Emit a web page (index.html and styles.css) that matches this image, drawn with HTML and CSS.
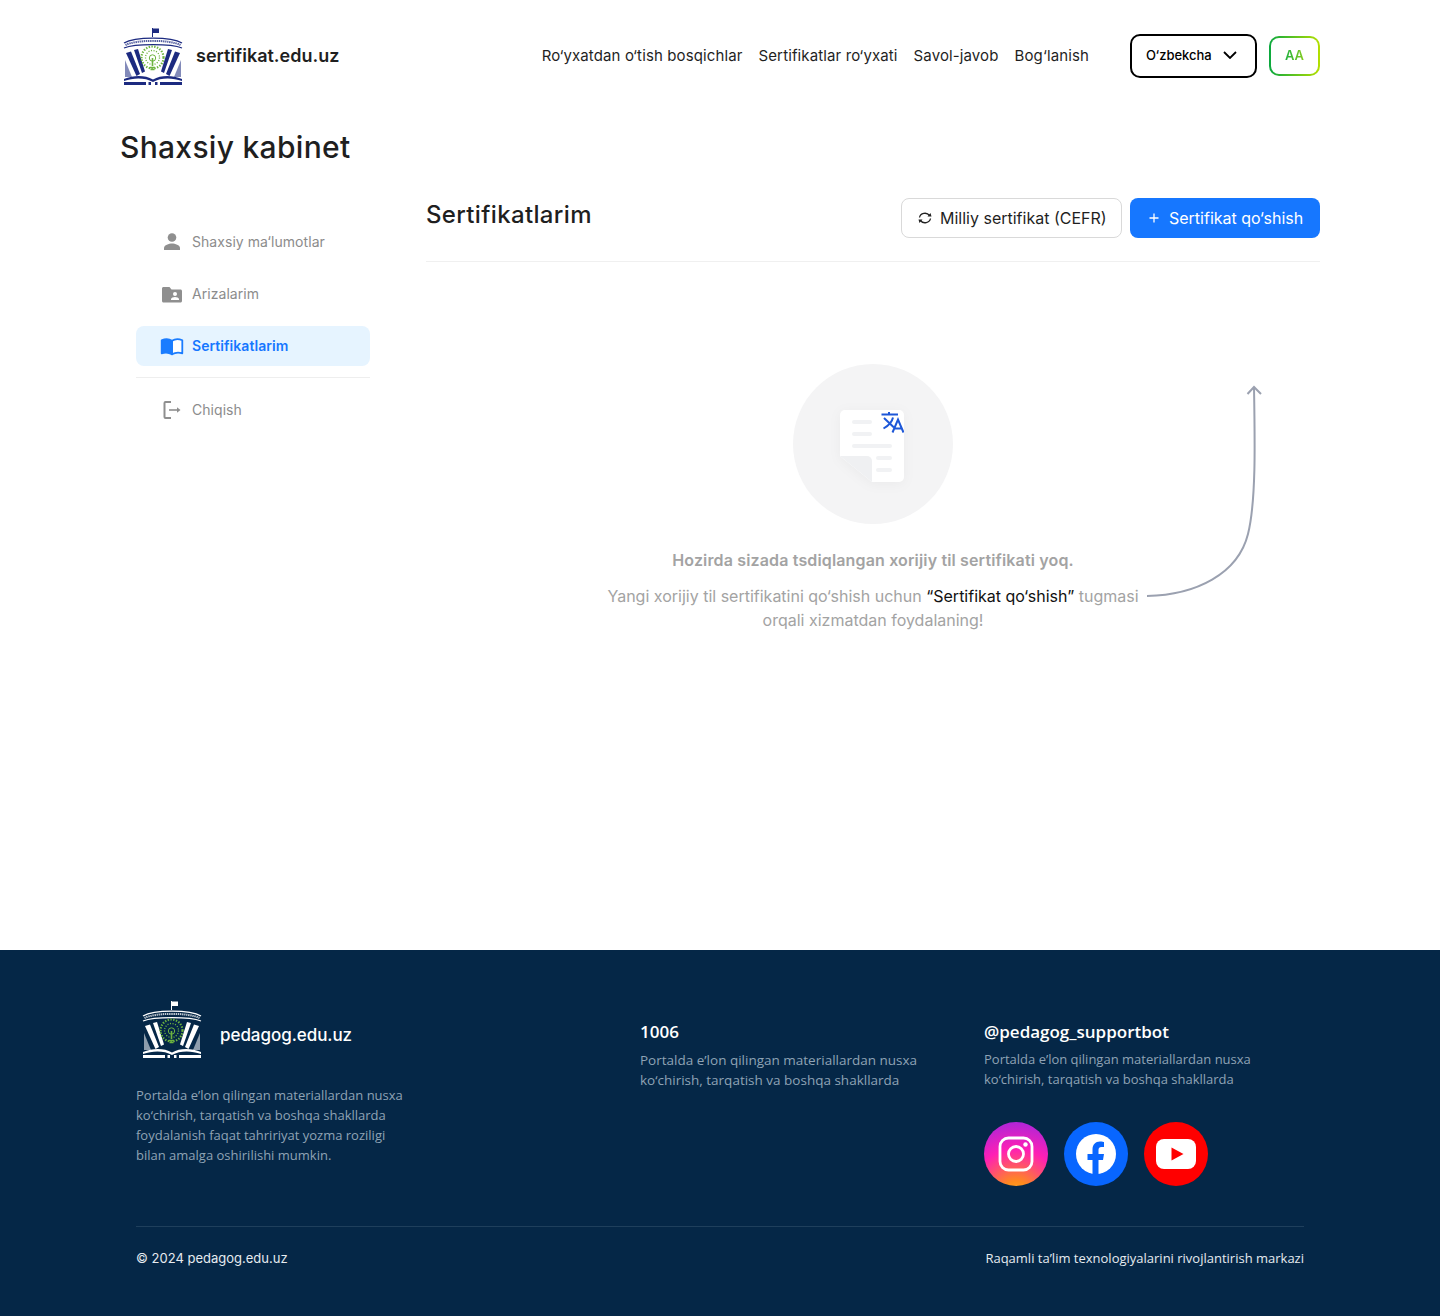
FILE: index.html
```html
<!DOCTYPE html>
<html lang="uz">
<head>
<meta charset="utf-8">
<title>Shaxsiy kabinet</title>
<link rel="stylesheet" href="styles.css">
</head>
<body>
<svg class="defs" width="0" height="0" aria-hidden="true">
  <symbol id="emblem" viewBox="0 0 60 58">
    <rect x="29" y="1" width="1" height="9" fill="currentColor"/>
    <rect x="30" y="1.500" width="6" height="4.500" fill="currentColor"/>
    <path d="M1 16C12 9.500 48 9.500 59 16" fill="none" stroke="currentColor" stroke-width="1.300"/>
    <path d="M2.500 18C13 12.500 47 12.500 57.500 18" fill="none" stroke="currentColor" stroke-width="2" stroke-dasharray="1.400 .7" opacity=".75"/>
    <path d="M1 21C12 16.500 48 16.500 59 21" fill="none" stroke="currentColor" stroke-width="1.300"/>
    <g fill="currentColor">
      <path d="M3 26L8 24.500L17 47L13.500 49z"/>
      <path d="M11 23L15 22L22 44.500L19 46z"/>
      <path d="M57 26L52 24.500L43 47L46.500 49z"/>
      <path d="M49 23L45 22L38 44.500L41 46z"/>
      <path d="M2 33L9 50L2 50z" opacity=".55"/>
      <path d="M58 33L51 50L58 50z" opacity=".55"/>
      <path d="M1 52C11 48 22 48 30 52.500C38 48 49 48 59 52V54C49 50.500 38 50.500 30 55C22 50.500 11 50.500 1 54z"/>
      <path d="M1 55H23V58H1zM37 55H59V58H37z"/>
      <path d="M25.500 55H28V58H25.500zM32 55H34.500V58H32z"/>
    </g>
    <circle cx="29.500" cy="30.500" r="11" fill="none" stroke="#6db33f" stroke-width="2.200" stroke-dasharray="1.400 1.400"/>
    <circle cx="29.500" cy="30.500" r="7" fill="none" stroke="#6db33f" stroke-width="1.300" stroke-dasharray="1.100 1.500"/>
    <circle cx="29.500" cy="31" r="3.200" fill="none" stroke="#6db33f" stroke-width="1"/>
    <path d="M29.500 31V39M27 40.500H32M27.500 42.500H31.500" stroke="#6db33f" stroke-width="1.600"/>
  </symbol>
</svg>

<div class="page">
  <header class="topbar">
    <a class="brand">
      <svg class="brand-logo" width="60" height="58"><use href="#emblem"/></svg>
      <span class="brand-name">sertifikat.edu.uz</span>
    </a>
    <nav class="topnav">
      <a>Ro‘yxatdan o‘tish bosqichlar</a>
      <a>Sertifikatlar ro‘yxati</a>
      <a>Savol-javob</a>
      <a>Bog‘lanish</a>
    </nav>
    <button class="lang">O‘zbekcha
      <svg width="14" height="8" viewBox="0 0 14 8"><path d="M1 1l6 6 6-6" fill="none" stroke="#000" stroke-width="1.800"/></svg>
    </button>
    <button class="a11y"><span class="a11y-text">AA</span></button>
  </header>

  <h1 class="page-title">Shaxsiy kabinet</h1>

  <div class="cabinet">
    <aside class="side">
      <a class="side-item">
        <svg width="24" height="24" viewBox="0 0 24 24"><circle cx="12" cy="7.500" r="4.300" fill="#8f8f8f"/><path d="M4 20v-2c0-3 5-4.500 8-4.500s8 1.500 8 4.500v2z" fill="#8f8f8f"/></svg>
        <span class="side-label">Shaxsiy ma‘lumotlar</span>
      </a>
      <a class="side-item">
        <svg width="24" height="24" viewBox="0 0 24 24"><path d="M2 6.500C2 5.500 2.800 5 3.500 5h6l2 2.500h9c.8 0 1.500.6 1.500 1.500v10c0 .8-.7 1.500-1.500 1.500h-17C2.700 20.500 2 19.800 2 19z" fill="#8f8f8f"/><circle cx="15" cy="12" r="2" fill="#fff"/><path d="M11 18v-1c0-1.300 2.500-2 4-2s4 .7 4 2v1z" fill="#fff"/></svg>
        <span class="side-label">Arizalarim</span>
      </a>
      <a class="side-item active">
        <svg width="24" height="24" viewBox="0 0 24 24"><path d="M12 6.800C15 4.800 19 4.800 22.300 6.300V19.300C19 18.300 15 18.500 12 20.300z" fill="#fff" stroke="#1a7cff" stroke-width="1.800" stroke-linejoin="round"/><path d="M1.700 6.300C5 4.800 9 4.800 12 6.800V20.300C9 18.500 5 18.300 1.700 19.300z" fill="#1a7cff" stroke="#1a7cff" stroke-width="1.800" stroke-linejoin="round"/></svg>
        <span class="side-label">Sertifikatlarim</span>
      </a>
      <div class="side-rule"></div>
      <a class="side-item">
        <svg width="24" height="24" viewBox="0 0 24 24"><path d="M11 4H5.500a1 1 0 0 0-1 1v14a1 1 0 0 0 1 1H11" fill="none" stroke="#8f8f8f" stroke-width="2"/><path d="M9 12h10" stroke="#8f8f8f" stroke-width="1.600"/><path d="M17 9.300l3.500 2.700-3.500 2.700z" fill="#8f8f8f"/></svg>
        <span class="side-label">Chiqish</span>
      </a>
    </aside>

    <main class="content">
      <div class="content-head">
        <h2 class="content-title">Sertifikatlarim</h2>
        <div class="actions">
          <button class="btn btn-ghost">
            <svg width="16" height="16" viewBox="0 0 16 16"><g fill="none" stroke="#222" stroke-width="1.300"><path d="M2.500 7.500A5.500 5 0 0 1 12.500 5.500"/><path d="M13.500 8.500A5.500 5 0 0 1 3.500 10.500"/></g><path d="M10.500 6.500h4l-1-3.500zM5.500 9.500h-4l1 3.500z" fill="#222"/></svg>
            Milliy sertifikat (CEFR)
          </button>
          <button class="btn btn-primary">
            <svg width="16" height="16" viewBox="0 0 16 16"><path d="M8 3.500v9M3.500 8h9" stroke="#fff" stroke-width="1.300"/></svg>
            Sertifikat qo‘shish
          </button>
        </div>
      </div>

      <section class="empty">
        <div class="empty-circle">
          <svg class="empty-doc" width="64" height="72" viewBox="0 0 64 72">
            <path d="M5 0H59a5 5 0 0 1 5 5V67a5 5 0 0 1-5 5H32L0 46V5a5 5 0 0 1 5-5z" fill="#fff"/>
            <path d="M0 46H27a5 5 0 0 1 5 5V72z" fill="#eff0f2"/>
            <g fill="#f1f2f4">
              <rect x="12" y="10" width="20" height="4" rx="2"/>
              <rect x="12" y="22" width="20" height="4" rx="2"/>
              <rect x="12" y="34" width="40" height="4" rx="2"/>
              <rect x="36" y="46" width="16" height="4" rx="2"/>
              <rect x="36" y="58" width="16" height="4" rx="2"/>
            </g>
            <g fill="none" stroke="#1d57d8" stroke-width="2">
              <path d="M41.500 4.500H58M49 2V4.500M44 8L54 17.500M53 7.500C52 12 48 16 43.500 18.500"/>
              <path d="M52.500 22.500L58 9.500L63.500 22.500M54.500 18.500H61.500"/>
            </g>
          </svg>
        </div>
        <p class="empty-title">Hozirda sizada tsdiqlangan xorijiy til sertifikati yoq.</p>
        <p class="empty-text">Yangi xorijiy til sertifikatini qo‘shish uchun <b>“Sertifikat qo‘shish”</b> tugmasi orqali xizmatdan foydalaning!</p>
        <svg class="empty-arrow" width="116" height="214" viewBox="0 0 116 214">
          <path d="M1 212C50 211 92 190 102 150C110 118 109 60 108 3M101.500 10L108 3L115 10" fill="none" stroke="#9ba1b0" stroke-width="2"/>
        </svg>
      </section>
    </main>
  </div>
</div>

<footer class="footer">
  <div class="footer-inner">
    <div class="footer-main">
      <div class="foot-about">
        <a class="foot-brand">
          <svg class="foot-logo" width="60" height="58"><use href="#emblem"/></svg>
          <span class="foot-name">pedagog.edu.uz</span>
        </a>
        <p class="foot-text">Portalda e’lon qilingan materiallardan nusxa ko‘chirish, tarqatish va boshqa shakllarda foydalanish faqat tahririyat yozma roziligi bilan amalga oshirilishi mumkin.</p>
      </div>
      <div class="foot-col">
        <h3 class="foot-head">1006</h3>
        <p class="foot-text foot-text-wide">Portalda e’lon qilingan materiallardan nusxa ko‘chirish, tarqatish va boshqa shakllarda</p>
      </div>
      <div class="foot-col foot-col-social">
        <h3 class="foot-head">@pedagog_supportbot</h3>
        <p class="foot-text">Portalda e’lon qilingan materiallardan nusxa ko‘chirish, tarqatish va boshqa shakllarda</p>
        <div class="socials">
          <a class="social social-ig">
            <svg width="36" height="36" viewBox="0 0 36 36"><rect x="2" y="2" width="32" height="32" rx="8.500" fill="none" stroke="#fff" stroke-width="2.800"/><circle cx="18" cy="18" r="7.500" fill="none" stroke="#fff" stroke-width="2.800"/><circle cx="27.500" cy="8.500" r="2.200" fill="#fff"/></svg>
          </a>
          <a class="social social-fb">
            <svg width="40" height="40" viewBox="0 0 40 40"><circle cx="20" cy="20" r="20" fill="#fff"/><path d="M16.500 40V26H11.500V20H16.500V15.500C16.500 10.500 19.500 7.500 24 7.500C26 7.500 28 8 28 8V13H25.500C23 13 22.500 14.500 22.500 16V20H28L27 26H22.500V40z" fill="#0866ff"/></svg>
          </a>
          <a class="social social-yt">
            <svg width="40" height="32" viewBox="0 0 40 32"><rect width="40" height="30" y="1" rx="8" fill="#fff"/><path d="M15.500 9.500L27.500 16L15.500 22.500z" fill="#f00"/></svg>
          </a>
        </div>
      </div>
    </div>
    <div class="foot-bottom">
      <span class="foot-copy">© 2024 pedagog.edu.uz</span>
      <span>Raqamli ta’lim texnologiyalarini rivojlantirish markazi</span>
    </div>
  </div>
</footer>
</body>
</html>
```
FILE: styles.css
```css
* { box-sizing: border-box; }
html, body { margin: 0; padding: 0; }
body { font-family: Inter, "Liberation Sans", sans-serif; color: #1f1f1f; background: #fff; height: 1316px; display: flex; flex-direction: column; }
p, h1, h2, h3 { margin: 0; }
button { font-family: inherit; cursor: pointer; }
.defs { position: absolute; }
.page { width: 1200px; margin: 0 auto; flex: 1; }

.topbar { height: 112px; display: flex; align-items: center; }
.brand { display: flex; align-items: center; gap: 13px; margin-left: 3px; color: #1c2a80; }
.brand-logo { display: block; }
.brand-name { font-size: 18px; font-weight: 600; color: #1f1f1f; padding-bottom: 2px; }
.topnav { margin-left: auto; display: flex; gap: 16px; font-size: 15px; letter-spacing: .12px; color: #1f1f1f; padding-bottom: 2px; }
.lang { margin-left: 41px; width: 127px; height: 44px; border: 2px solid #000; border-radius: 10px; background: #fff; display: flex; align-items: center; justify-content: space-between; padding: 0 18px 2px 14px; font-size: 13px; font-weight: 500; color: #000; }
.a11y { margin-left: 12px; width: 51px; height: 40px; border: 2px solid transparent; border-radius: 10px; background: linear-gradient(#fff, #fff) padding-box, linear-gradient(90deg, #0aa83f, #b5e000) border-box; font-size: 13px; font-weight: 600; padding: 0 0 2px; }
.a11y-text { background: linear-gradient(90deg, #1cb03c, #86cc20); -webkit-background-clip: text; background-clip: text; color: transparent; }

.page-title { font-size: 30px; font-weight: 550; line-height: 36px; margin-top: 17px; height: 69px; letter-spacing: .3px; }
.cabinet { display: flex; }
.side { width: 306px; padding: 24px 0 0 16px; flex: none; }
.side-item { width: 234px; height: 40px; margin-bottom: 12px; display: flex; align-items: center; gap: 8px; padding-left: 24px; border-radius: 8px; font-size: 14px; letter-spacing: .05px; color: #8c8c8c; }
.side-label { padding-bottom: 2px; }
.side-item.active { background: #e6f4ff; color: #1677ff; font-weight: 600; margin-bottom: 11px; }
.side-rule { width: 234px; height: 1px; background: #eee; margin-bottom: 12px; }

.content { flex: 1; }
.content-head { height: 64px; display: flex; justify-content: space-between; border-bottom: 1px solid #f0f0f0; }
.content-title { font-size: 24px; font-weight: 550; line-height: 34px; letter-spacing: .35px; }
.actions { display: flex; gap: 8px; height: 40px; }
.btn { height: 40px; border-radius: 8px; font-size: 16px; display: flex; align-items: center; gap: 7px; }
.btn-ghost { width: 221px; padding: 0 0 0 15px; background: #fff; border: 1px solid #d9d9d9; color: #1f1f1f; }
.btn-primary { width: 190px; padding: 0 0 0 16px; background: #1677ff; border: 0; color: #fff; }

.empty { position: relative; display: flex; flex-direction: column; align-items: center; padding-top: 102px; }
.empty-circle { width: 160px; height: 160px; border-radius: 50%; background: #f4f4f5; display: flex; align-items: center; justify-content: center; }
.empty-doc { margin: 4px 2px 0 0; filter: drop-shadow(0 2px 6px rgba(0, 0, 0, .04)); }
.empty-title { margin-top: 25px; font-size: 16px; font-weight: 600; line-height: 22px; letter-spacing: .15px; color: #a3a3a3; }
.empty-text { margin-top: 13px; width: 560px; text-align: center; font-size: 16px; line-height: 24px; color: #a3a3a3; }
.empty-text b { font-weight: 400; color: #111; }
.empty-arrow { position: absolute; left: 720px; top: 122px; }

.footer { height: 366px; background: #052747; color: #fff; }
.footer-inner { width: 1168px; height: 100%; margin: 0 auto; display: flex; flex-direction: column; }
.footer-main { height: 277px; border-bottom: 1px solid #1f3f5c; display: flex; font-family: "Open Sans", sans-serif; }
.foot-about { width: 504px; padding-top: 50px; }
.foot-brand { display: flex; align-items: center; gap: 18px; margin-left: 6px; color: #fff; }
.foot-name { font-family: Inter, sans-serif; font-size: 17px; font-weight: 500; padding-top: 11px; letter-spacing: -.05px; }
.foot-logo { display: block; }
.foot-about .foot-text { margin-top: 27px; width: 275px; }
.foot-text { font-size: 13px; line-height: 20px; color: #8fa3b5; width: 285px; }
.foot-text-wide { font-size: 13.5px; }
.foot-col { width: 344px; padding-top: 71px; }
.foot-col-social { width: 320px; }
.foot-head { font-size: 17px; font-weight: 600; line-height: 22px; margin-bottom: 7px; color: #fff; }
.foot-col-social .foot-head { margin-bottom: 6px; }
.socials { display: flex; gap: 16px; margin-top: 33px; }
.social { width: 64px; height: 64px; border-radius: 50%; display: flex; align-items: center; justify-content: center; }
.social-ig { background: radial-gradient(circle at 50% 115%, #ffb01f 0, #ff8a1f 18%, #ff1fb4 58%, #9d27e0 100%); }
.social-fb { background: #0866ff; }
.social-yt { background: #f00; }
.foot-bottom { flex: 1; display: flex; justify-content: space-between; padding-top: 22px; font-family: "Open Sans", sans-serif; font-size: 13px; line-height: 18px; color: #e6ebf0; }
.foot-copy { font-family: Inter, sans-serif; }
```
